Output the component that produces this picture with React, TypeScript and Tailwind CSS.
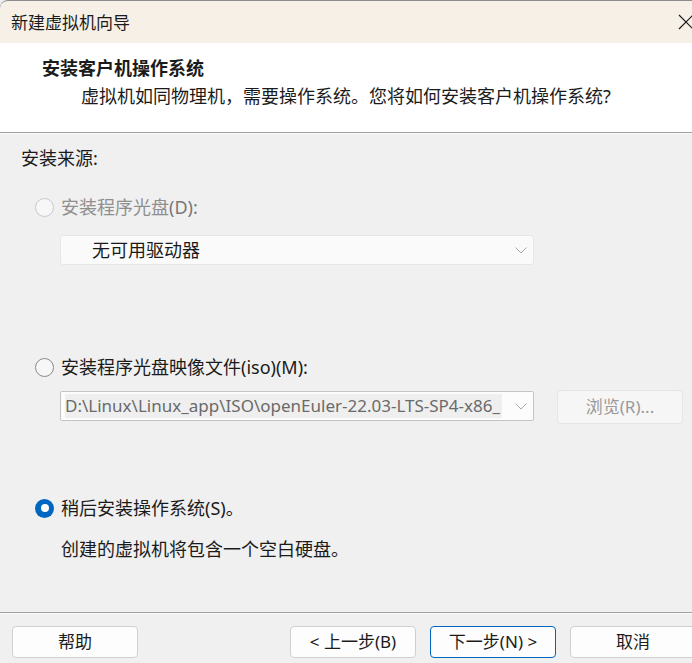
import React from "react";

const FONT = { fontFamily: '"Noto Sans", "Noto Sans CJK SC", sans-serif' };

function Radio({ state }: { state: "disabled" | "off" | "on" }) {
  if (state === "on") {
    return (
      <span className="flex h-[19px] w-[19px] shrink-0 items-center justify-center rounded-full bg-[#0067c0]">
        <span className="h-[8px] w-[8px] rounded-full bg-white" />
      </span>
    );
  }
  return (
    <span
      className={`h-[19px] w-[19px] shrink-0 rounded-full border bg-[#f7f7f7] ${
        state === "disabled" ? "border-[#c9c9c9]" : "border-[#8a8a8a]"
      }`}
    />
  );
}

function Chevron({ color }: { color: string }) {
  return (
    <svg width="12" height="7" viewBox="0 0 12 7" fill="none" className="shrink-0">
      <path d="M0.5 0.5 L6 6 L11.5 0.5" stroke={color} strokeWidth="1" />
    </svg>
  );
}

function FooterButton({ label, primary }: { label: string; primary?: boolean }) {
  return (
    <button
      className={`flex h-[32px] w-[126px] shrink-0 items-center justify-center rounded-[4px] border bg-[#fdfdfd] text-[17px] text-[#1b1b1b] ${
        primary ? "border-[#0067c0]" : "border-[#d0d0d0]"
      }`}
    >
      {label}
    </button>
  );
}

export default function App() {
  return (
    <div
      className="flex h-[663px] w-[692px] flex-col overflow-hidden bg-[#f0f0f0] text-[#1b1b1b]"
      style={FONT}
    >
      {/* Title bar */}
      <div className="relative flex h-[43px] shrink-0 items-center rounded-tl-[8px] border-t border-[#8c8c8c] bg-[#f7f0e7] pl-[11px]">
        <span className="text-[17px] leading-none text-[#1b1b1b]">新建虚拟机向导</span>
        <svg
          className="absolute left-[678px] top-[13px]"
          width="16"
          height="16"
          viewBox="0 0 16 16"
          fill="none"
        >
          <path d="M1 1 L15 15 M15 1 L1 15" stroke="#1b1b1b" strokeWidth="1.2" />
        </svg>
      </div>

      {/* Header */}
      <div className="flex h-[89px] shrink-0 flex-col bg-white pt-[13px]">
        <div className="pl-[42px] text-[18px] font-bold leading-[24px]">安装客户机操作系统</div>
        <div className="mt-[4px] pl-[81px] text-[18px] leading-[24px]">
          虚拟机如同物理机，需要操作系统。您将如何安装客户机操作系统?
        </div>
      </div>
      <div className="h-px shrink-0 bg-[#a0a0a0]" />
      <div className="h-px shrink-0 bg-[#fbfbfb]" />

      {/* Body */}
      <div className="flex flex-1 flex-col pl-[21px] pt-[12px] text-[18px] leading-[24px]">
        <div>安装来源:</div>

        <div className="mt-[25px] flex items-center gap-[7px] pl-[14px] text-[#8f8f8f]">
          <Radio state="disabled" />
          <span>
            安装程序光盘<span className="text-[#777777]">(D):</span>
          </span>
        </div>

        <div className="ml-[39px] mt-[16px] flex h-[30px] w-[474px] items-center justify-between rounded-[3px] border border-[#e6e6e6] bg-[#fafafa] pl-[31px] pr-[6px]">
          <span className="text-[#1b1b1b]">无可用驱动器</span>
          <Chevron color="#a8a8a8" />
        </div>

        <div className="mt-[90px] flex items-center gap-[7px] pl-[14px]">
          <Radio state="off" />
          <span>安装程序光盘映像文件(iso)(M):</span>
        </div>

        <div className="mt-[11px] flex items-start">
          <div className="ml-[39px] mt-px flex h-[30px] w-[474px] items-center justify-between rounded-[2px] border border-[#c4c4c4] bg-[#fcfcfc] pl-[4px] pr-[6px]">
            <span className="whitespace-nowrap bg-[#efefef] pr-[2px] text-[17px] text-[#6a6a6a]">
              D:\Linux\Linux_app\ISO\openEuler-22.03-LTS-SP4-x86_
            </span>
            <Chevron color="#a8a8a8" />
          </div>
          <button className="ml-[23px] flex h-[34px] w-[126px] items-center justify-center rounded-[4px] border border-[#e6e6e6] bg-[#f6f6f6] text-[17px] text-[#9a9a9a]">
            浏览(R)...
          </button>
        </div>

        <div className="mt-[72px] flex items-center gap-[7px] pl-[14px]">
          <Radio state="on" />
          <span>稍后安装操作系统(S)。</span>
        </div>

        <div className="mt-[17px] pl-[40px]">创建的虚拟机将包含一个空白硬盘。</div>
      </div>

      {/* Footer */}
      <div className="h-px shrink-0 bg-[#a0a0a0]" />
      <div className="h-px shrink-0 bg-[#fbfbfb]" />
      <div className="flex h-[49px] shrink-0 items-start pl-[12px] pt-[12px]">
        <FooterButton label="帮助" />
        <div className="ml-[152px] flex gap-[14px]">
          <FooterButton label="< 上一步(B)" />
          <FooterButton label="下一步(N) >" primary />
          <FooterButton label="取消" />
        </div>
      </div>
    </div>
  );
}
